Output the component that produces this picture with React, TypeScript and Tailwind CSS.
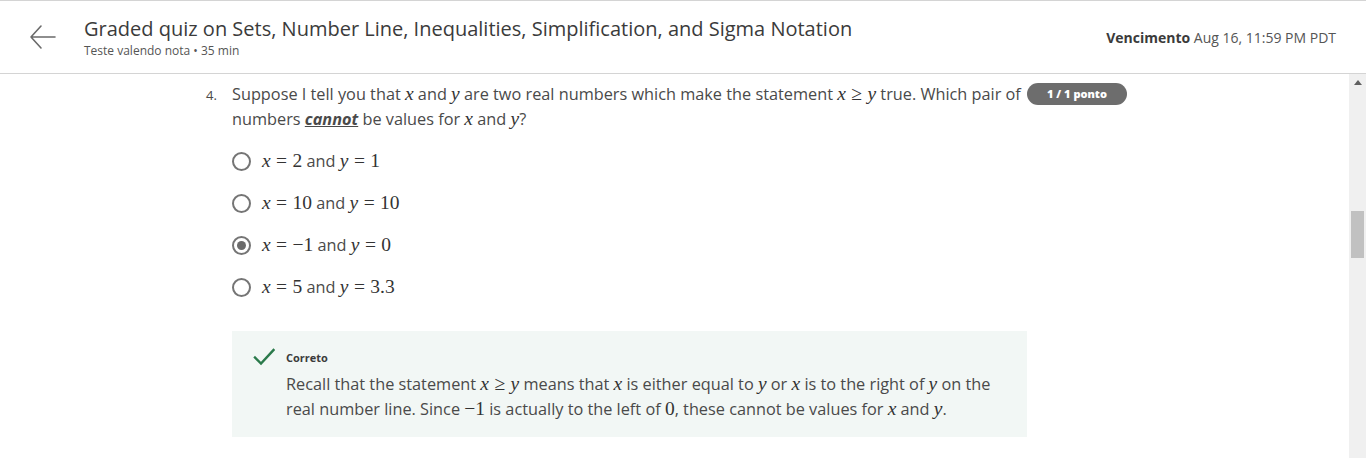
import React from "react";

// Inline math, rendered roughly like KaTeX output.
function V({ children }: { children: React.ReactNode }) {
  return <span className="italic">{children}</span>;
}

// Relation symbol with KaTeX-like thick spacing on both sides.
function R({ children }: { children: React.ReactNode }) {
  return <span className="mx-[0.28em]">{children}</span>;
}

function M({ children }: { children: React.ReactNode }) {
  return (
    <span className="font-['Liberation_Serif',serif] text-[19.5px] leading-none text-[#333]">
      {children}
    </span>
  );
}

const OPTIONS: { x: string; y: string; selected?: boolean }[] = [
  { x: "2", y: "1" },
  { x: "10", y: "10" },
  { x: "\u22121", y: "0", selected: true },
  { x: "5", y: "3.3" },
];

function Radio({ selected }: { selected?: boolean }) {
  return (
    <span className="flex h-[19px] w-[19px] items-center justify-center rounded-full border-2 border-[#757575] bg-white">
      {selected && <span className="h-[9px] w-[9px] rounded-full bg-[#6b6b6b]" />}
    </span>
  );
}

export default function App() {
  return (
    <div className="flex h-[458px] w-[1366px] flex-col overflow-hidden bg-white font-['Open_Sans',sans-serif] text-[#4a4a4a]">
      {/* Header */}
      <header className="flex h-[74px] shrink-0 items-center border-t border-b border-[#d4d4d4] pr-[30px]">
        <div className="flex w-[84px] justify-center pl-[2px]">
          <svg width="28" height="28" viewBox="0 0 28 28" fill="none" stroke="#6a6a6a" strokeWidth="1.6" strokeLinecap="round" strokeLinejoin="round">
            <path d="M26 14H2M12 3L2 14l10 11" />
          </svg>
        </div>
        <div className="flex flex-1 flex-col">
          <h1 className="text-[20px] leading-[24px] text-[#3b3b3b]">
            Graded quiz on Sets, Number Line, Inequalities, Simplification, and Sigma Notation
          </h1>
          <span className="mt-[2px] text-[12px] leading-[15px] text-[#555]">Teste valendo nota • 35 min</span>
        </div>
        <div className="text-[14px] text-[#555]">
          <span className="font-bold text-[#3b3b3b]">Vencimento</span> Aug 16, 11:59 PM PDT
        </div>
      </header>

      <div className="flex min-h-0 flex-1">
        <main className="flex-1 pl-[206px] pt-[8px]">
          {/* Question */}
          <div className="flex items-start">
            <span className="w-[26px] pt-[3px] text-[13px] leading-[20px]">4.</span>
            <p className="w-[795px] text-[16.3px] leading-[25px]">
              Suppose I tell you that <M><V>x</V></M> and <M><V>y</V></M> are two real numbers which make the statement{" "}
              <M><V>x</V><R>≥</R><V>y</V></M> true. Which pair of
              <br />
              numbers <strong className="font-bold italic underline">cannot</strong> be values for <M><V>x</V></M> and{" "}
              <M><V>y</V></M>?
            </p>
            <span className="mt-[1px] flex h-[22px] w-[100px] items-center justify-center rounded-full bg-[#6d6d6d] text-[11px] font-extrabold text-white">
              1 / 1 ponto
            </span>
          </div>

          {/* Options */}
          <div className="ml-[26px] mt-[8px] flex flex-col">
            {OPTIONS.map((o, i) => (
              <div key={i} className="flex h-[42px] items-center gap-[11px] text-[16.3px]">
                <Radio selected={o.selected} />
                <span>
                  <M><V>x</V><R>=</R>{o.x}</M> and <M><V>y</V><R>=</R>{o.y}</M>
                </span>
              </div>
            ))}
          </div>

          {/* Feedback */}
          <div className="ml-[26px] mt-[23px] w-[795px] bg-[#f2f7f5] pb-[15px] pl-[21px] pt-[19px]">
            <div className="flex items-start gap-[11px]">
              <svg width="22" height="18" viewBox="0 0 22 18" fill="none" stroke="#2b7a4b" strokeWidth="2.4" strokeLinecap="square" className="mt-[-2px] shrink-0">
                <path d="M2 9.5l6 6L20.5 2" />
              </svg>
              <div className="flex flex-col">
                <span className="text-[11px] font-bold leading-[16px] text-[#3b3b3b]">Correto</span>
                <p className="mt-[6px] text-[16.3px] leading-[25px]">
                  Recall that the statement <M><V>x</V><R>≥</R><V>y</V></M> means that <M><V>x</V></M> is either equal to{" "}
                  <M><V>y</V></M> or <M><V>x</V></M> is to the right of <M><V>y</V></M> on the
                  <br />
                  real number line. Since <M>−1</M> is actually to the left of <M>0</M>, these cannot be values for{" "}
                  <M><V>x</V></M> and <M><V>y</V></M>.
                </p>
              </div>
            </div>
          </div>
        </main>

        {/* Scrollbar */}
        <div className="relative flex w-[17px] shrink-0 flex-col items-center bg-[#f0f0f0]">
          <svg width="8" height="5" viewBox="0 0 8 5" className="mt-[6px]">
            <path d="M0 5L4 0l4 5z" fill="#606060" />
          </svg>
          <div className="mt-[126px] h-[47px] w-[13px] bg-[#c1c1c1]" />
        </div>
      </div>
    </div>
  );
}
